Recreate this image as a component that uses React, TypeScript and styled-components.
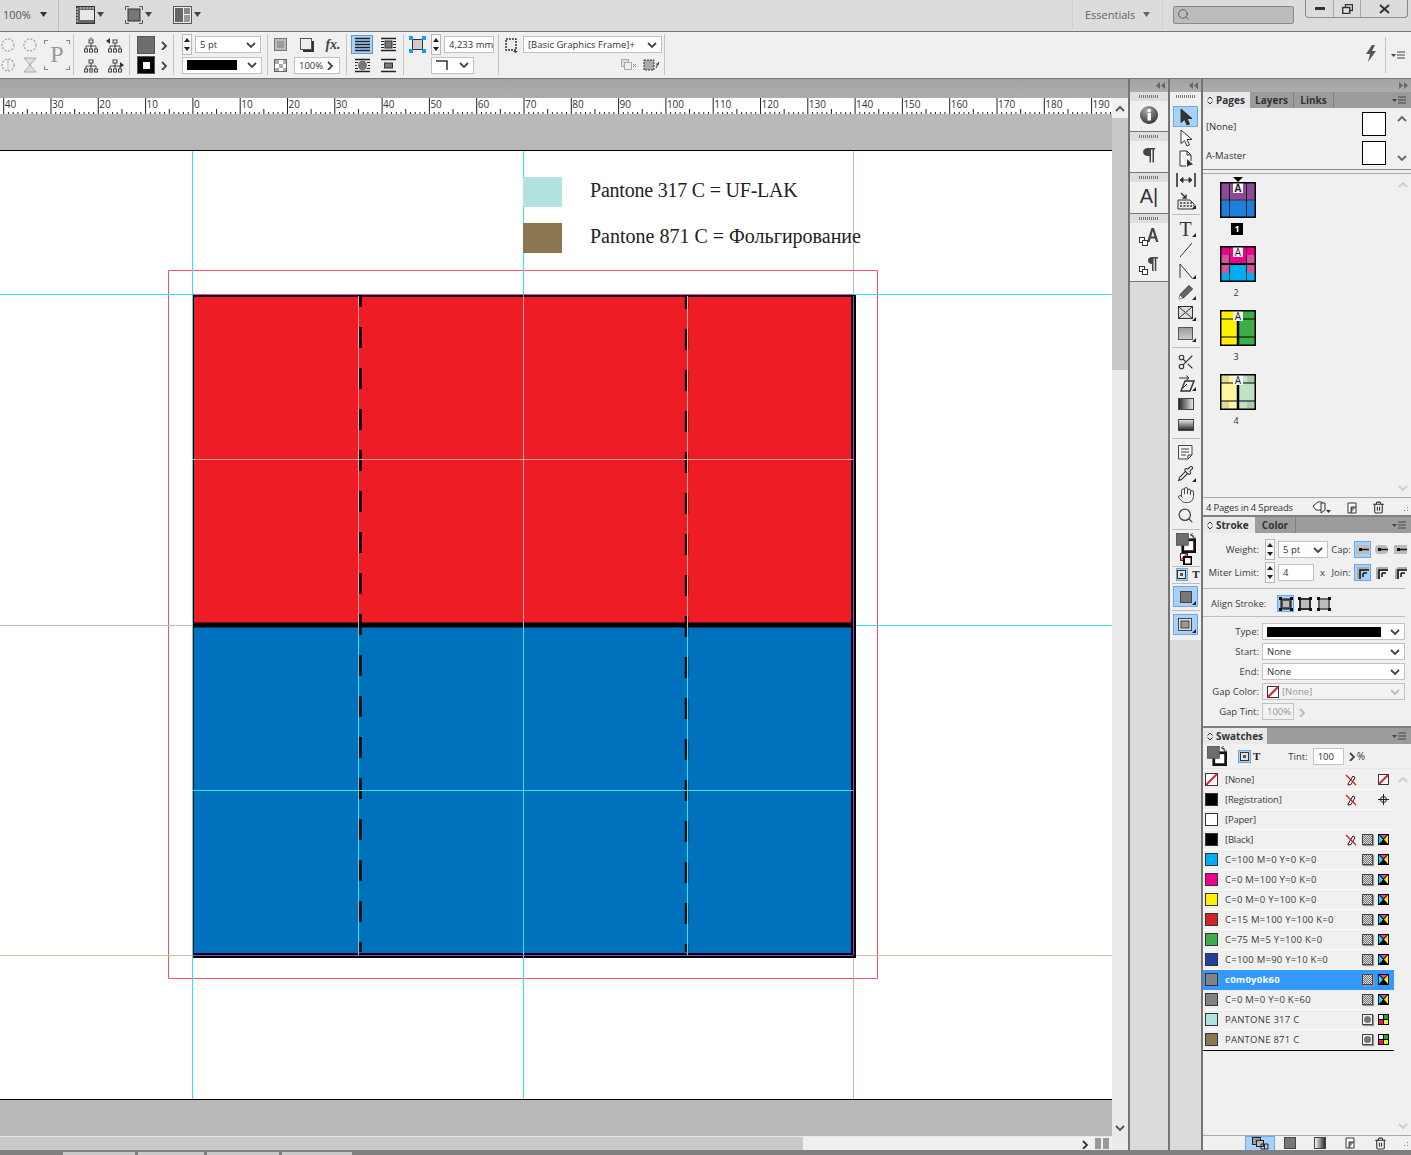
import React from 'react';
import styled, { createGlobalStyle } from 'styled-components';
import { Hand, Pipette, Scissors, Search, Trash2 } from 'lucide-react';

const GlobalStyle = createGlobalStyle`
  html, body { margin: 0; padding: 0; background: #7f7f7f; }
  * { box-sizing: border-box; }
`;

const App_ = styled.div`
  width: 1411px;
  height: 1155px;
  display: flex;
  flex-direction: column;
  overflow: hidden;
  font-family: "Open Sans", "DejaVu Sans", sans-serif;
  font-size: 10px;
  color: #333;
  background: #7f7f7f;
`;

/* ---------- title bar ---------- */
const TitleBar = styled.div`
  height: 32px;
  flex: none;
  display: flex;
  align-items: flex-start;
  background: #dcdcdc;
  border-bottom: 1px solid #777;
`;
const Zoom = styled.div`
  width: 59px;
  height: 31px;
  padding: 0 0 3px 3px;
  display: flex;
  align-items: center;
  gap: 9px;
  font-size: 11px;
  color: #555;
  border-right: 1px solid #bdbdbd;
`;
const ViewMenus = styled.div`
  display: flex;
  align-items: center;
  height: 29px;
  padding-left: 17px;
  gap: 21px;
`;
const ViewMenu = styled.div`
  display: flex;
  align-items: center;
  gap: 2px;
`;
const TitleSpacer = styled.div`
  flex: 1;
`;
const Workspace = styled.div`
  width: 91px;
  height: 29px;
  display: flex;
  align-items: center;
  gap: 8px;
  padding-left: 12px;
  font-size: 11px;
  color: #666;
  border-left: 1px solid #cfcfcf;
  border-right: 1px solid #cfcfcf;
`;
const SearchBox = styled.div`
  width: 121px;
  height: 18px;
  margin: 6px 11px 0 10px;
  padding: 1px 0 0 3px;
  background: #bcbcbc;
  border: 1px solid #8a8a8a;
  border-radius: 2px;
  color: #555;
`;
const WindowButtons = styled.div`
  width: 103px;
  height: 18px;
  margin-right: 3px;
  display: grid;
  grid-template-columns: 28px 27px 1fr;
  border: 1px solid #8a8a8a;
  border-top: none;
  border-radius: 0 0 4px 4px;
`;
const WindowButton = styled.div`
  display: flex;
  align-items: center;
  justify-content: center;
  border-right: 1px solid #aaa;
  &:last-child { border-right: none; }
`;

/* ---------- control bar ---------- */
const ControlBar = styled.div`
  height: 47px;
  flex: none;
  display: flex;
  background: #f0f0f0;
  border-bottom: 1px solid #777;
`;
const Group = styled.div<{ $w: number; $pad?: number; $cols: string; $line?: boolean }>`
  width: ${(p) => p.$w}px;
  height: 41px;
  margin-top: 2px;
  padding-left: ${(p) => p.$pad ?? 0}px;
  display: grid;
  grid-template-columns: ${(p) => p.$cols};
  grid-template-rows: 21px 20px;
  align-items: center;
  justify-items: start;
  border-right: ${(p) => (p.$line === false ? 'none' : '1px solid #c4c4c4')};
`;
const CenterCell = styled.div`
  justify-self: center;
`;
const ControlSpacer = styled.div`
  flex: 1;
`;
const Field = styled.div<{ $w: number; $span?: number; $off?: boolean }>`
  width: ${(p) => p.$w}px;
  height: 17px;
  grid-column: span ${(p) => p.$span ?? 1};
  display: flex;
  align-items: center;
  justify-content: space-between;
  padding: 0 4px;
  background: ${(p) => (p.$off ? '#f2f2f2' : '#fff')};
  border: 1px solid #c2c2c2;
  font-size: 9.5px;
  color: ${(p) => (p.$off ? '#999' : '#333')};
  white-space: nowrap;
`;
const StrokeBar = styled.span<{ $w: number }>`
  display: block;
  width: ${(p) => p.$w}px;
  height: 10px;
  background: #000;
`;
const SpinnerBox = styled.div`
  width: 10px;
  height: 21px;
  display: flex;
  flex-direction: column;
  align-items: center;
  justify-content: space-around;
  background: #f8f8f8;
  border: 1px solid #b8b8b8;
`;
const FillChip = styled.div<{ $stroke?: boolean }>`
  width: 18px;
  height: 18px;
  display: flex;
  align-items: center;
  justify-content: center;
  background: ${(p) => (p.$stroke ? '#000' : '#6d6d70')};
  border: 1px solid #555;
`;
const HoleMark = styled.span`
  width: 7px;
  height: 7px;
  background: #fff;
`;
const ToolButton = styled.div<{ $on?: boolean }>`
  width: 22px;
  height: 19px;
  display: flex;
  align-items: center;
  justify-content: center;
  background: ${(p) => (p.$on ? '#a9d1f7' : 'transparent')};
  border: 1px solid ${(p) => (p.$on ? '#5b9bd5' : 'transparent')};
`;
const RefBox = styled.div`
  grid-row: span 2;
  width: 26px;
  height: 30px;
  margin-left: 2px;
  display: flex;
  align-items: center;
  justify-content: center;
  font-family: "Liberation Serif", serif;
  font-size: 24px;
  color: #999;
  background:
    linear-gradient(#888, #888) 0 0 / 4px 1px no-repeat,
    linear-gradient(#888, #888) 0 0 / 1px 4px no-repeat,
    linear-gradient(#888, #888) 100% 0 / 4px 1px no-repeat,
    linear-gradient(#888, #888) 100% 0 / 1px 4px no-repeat,
    linear-gradient(#888, #888) 0 100% / 4px 1px no-repeat,
    linear-gradient(#888, #888) 0 100% / 1px 4px no-repeat,
    linear-gradient(#888, #888) 100% 100% / 4px 1px no-repeat,
    linear-gradient(#888, #888) 100% 100% / 1px 4px no-repeat;
`;
const FxMark = styled.span`
  font-family: "Liberation Serif", serif;
  font-style: italic;
  font-weight: bold;
  font-size: 14px;
  color: #444;
`;
const FrameActions = styled.div`
  grid-column: 2;
  width: 139px;
  display: flex;
  justify-content: flex-end;
  gap: 6px;
  padding-right: 2px;
`;
const RightBlock = styled.div`
  width: 26px;
  height: 36px;
  margin-top: 5px;
  display: flex;
  align-items: center;
  justify-content: center;
  border-left: 1px solid #c4c4c4;
`;
const BoltBlock = styled.div`
  width: 26px;
  padding: 13px 0 0 6px;
`;

/* ---------- main row ---------- */
const MainRow = styled.div`
  flex: 1;
  display: flex;
  min-height: 0;
`;
const DocColumn = styled.div`
  width: 1128px;
  flex: none;
  display: flex;
  flex-direction: column;
  background: #b9b9b9;
`;
const DocStrip = styled.div`
  height: 19px;
  flex: none;
  background: linear-gradient(#a5a5a5, #acacac);
`;
const DocBody = styled.div`
  flex: 1;
  display: grid;
  grid-template-columns: 1112px 16px;
  min-height: 0;
`;
const DocMain = styled.div`
  display: flex;
  flex-direction: column;
  min-width: 0;
`;
const RulerBar = styled.div`
  height: 16px;
  flex: none;
  background: #fff;
`;
const Pasteboard = styled.div`
  height: 36px;
  flex: none;
  background: #b9b9b9;
`;
const Canvas = styled.div`
  position: relative;
  flex: 1;
  background: #fff;
  border-top: 1px solid #000;
  border-bottom: 1px solid #000;
  overflow: hidden;
`;
const ArtLayer = styled.svg`
  position: absolute;
  left: 0;
  top: 0;
  display: block;
`;
const Legend = styled.div`
  position: absolute;
  left: 523px;
  top: 26px;
  display: flex;
  flex-direction: column;
  gap: 16px;
`;
const LegendRow = styled.div`
  height: 30px;
  display: flex;
  align-items: center;
  gap: 28px;
`;
const LegendChip = styled.div<{ $c: string }>`
  width: 39px;
  height: 30px;
  background: ${(p) => p.$c};
`;
const LegendText = styled.div<{ $track?: number }>`
  padding-bottom: 3px;
  font-family: "Liberation Serif", serif;
  font-size: 20px;
  letter-spacing: ${(p) => p.$track ?? 0}px;
  color: #222;
  white-space: nowrap;
`;
const HScroll = styled.div`
  height: 14px;
  flex: none;
  display: flex;
  align-items: center;
  background: linear-gradient(90deg, #c9c9c9 803px, #f0f0f0 803px);
  border-top: 1px solid #e8e8e8;
  justify-content: flex-end;
  gap: 5px;
  padding-right: 2px;
`;
const SplitMark = styled.span`
  width: 15px;
  height: 11px;
  background:
    linear-gradient(#999, #999) 0 0 / 6px 100% no-repeat,
    linear-gradient(#999, #999) 8px 0 / 6px 100% no-repeat;
`;
const VScroll = styled.div`
  display: flex;
  flex-direction: column;
  align-items: center;
  justify-content: space-between;
  padding: 6px 0 17px;
  background: linear-gradient(#f0f0f0 20px, #c9c9c9 20px, #c9c9c9 272px, #ebebeb 272px);
`;
const Rail = styled.div`
  width: 2px;
  flex: none;
  background: #757575;
`;
const DockColumn = styled.div<{ $w: number }>`
  width: ${(p) => p.$w}px;
  flex: none;
  display: flex;
  flex-direction: column;
  background: #dcdcdc;
`;
const DockHead = styled.div<{ $align?: string }>`
  height: 13px;
  flex: none;
  display: flex;
  align-items: center;
  justify-content: ${(p) => p.$align ?? 'flex-end'};
  padding: 0 3px;
  background: linear-gradient(#a3a3a3, #adadad);
`;
const IconSection = styled.div`
  display: flex;
  flex-direction: column;
  align-items: center;
  background: #f0f0f0;
  border-bottom: 1px solid #777;
`;
const Grip = styled.div<{ $bg?: string; $h?: number }>`
  width: 100%;
  height: ${(p) => p.$h ?? 9}px;
  padding-bottom: ${(p) => (p.$h ?? 9) - 9}px;
  flex: none;
  display: flex;
  align-items: center;
  justify-content: center;
  background: ${(p) => p.$bg ?? '#dedede'};
  &::after {
    content: '';
    width: 20px;
    height: 3px;
    background: repeating-linear-gradient(90deg, #777 0 1px, transparent 1px 2px);
  }
`;
const IconSlot = styled.div<{ $h: number; $lift?: number }>`
  height: ${(p) => p.$h}px;
  padding-bottom: ${(p) => p.$lift ?? 3}px;
  display: flex;
  align-items: center;
  justify-content: center;
`;
const ToolsPanel = styled.div`
  display: flex;
  flex-direction: column;
  align-items: center;
  background: #f0f0f0;
  padding-bottom: 5px;
`;
const ToolSlot = styled.div<{ $on?: boolean; $h?: number; $fly?: boolean }>`
  position: relative;
  width: 25px;
  height: ${(p) => p.$h ?? 21}px;
  flex: none;
  display: flex;
  align-items: center;
  justify-content: center;
  background: ${(p) => (p.$on ? '#a9d1f7' : 'transparent')};
  border: 1px solid ${(p) => (p.$on ? '#6ba7e0' : 'transparent')};
  &::after {
    content: '';
    display: ${(p) => (p.$fly ? 'block' : 'none')};
    position: absolute;
    right: 1px;
    bottom: 1px;
    width: 0;
    height: 0;
    border-left: 4px solid transparent;
    border-bottom: 4px solid #222;
  }
`;
const ToolLine = styled.div<{ $y?: number }>`
  width: 28px;
  height: 1px;
  flex: none;
  margin: ${(p) => p.$y ?? 3}px 0;
  background: #bcbcbc;
`;
const ToolT = styled.span`
  font-family: "Liberation Serif", serif;
  font-size: 20px;
  line-height: 20px;
  color: #333;
`;
const FormatRow = styled.div`
  width: 28px;
  height: 13px;
  flex: none;
  display: flex;
  align-items: center;
  padding-left: 4px;
  gap: 4px;
`;
const FormatChip = styled.div`
  width: 13px;
  height: 13px;
  display: flex;
  align-items: center;
  justify-content: center;
  background: #a9d1f7;
  border: 1px solid #6ba7e0;
`;
const SmallT = styled.span`
  font-family: "Liberation Serif", serif;
  font-weight: bold;
  font-size: 11px;
  line-height: 13px;
  color: #222;
`;
const GlyphA = styled.span`
  font-family: "Liberation Sans", sans-serif;
  font-size: 20px;
  color: #333;
`;

/* ---------- panels ---------- */
const PanelsColumn = styled.div`
  flex: 1;
  display: flex;
  flex-direction: column;
  min-width: 0;
`;
const Panel = styled.div<{ $h?: number; $grow?: boolean }>`
  ${(p) => (p.$grow ? 'flex: 1; min-height: 0;' : `height: ${p.$h}px; flex: none;`)}
  display: flex;
  flex-direction: column;
  background: #f0f0f0;
  & + & { margin-top: 2px; }
`;
const TabBar = styled.div`
  height: 16px;
  flex: none;
  display: flex;
  background: #9c9c9c;
`;
const Tab = styled.div<{ $on?: boolean; $w: number }>`
  width: ${(p) => p.$w}px;
  display: flex;
  align-items: center;
  justify-content: ${(p) => (p.$on ? 'flex-start' : 'center')};
  gap: 3px;
  padding-left: ${(p) => (p.$on ? 4 : 0)}px;
  font-size: 10px;
  font-weight: 700;
  color: #333;
  background: ${(p) => (p.$on ? '#e9e9e9' : 'transparent')};
  border-right: 1px solid ${(p) => (p.$on ? 'transparent' : '#7e7e7e')};
`;
const TabSpacer = styled.div`
  flex: 1;
`;
const TabMenu = styled.div`
  display: flex;
  align-items: center;
  padding-right: 4px;
`;
const MasterArea = styled.div`
  height: 62px;
  flex: none;
  display: grid;
  grid-template-columns: 1fr 18px;
  border-bottom: 1px solid #888;
`;
const MasterRows = styled.div`
  display: flex;
  flex-direction: column;
  padding: 4px 7px 0 3px;
  gap: 5px;
`;
const MasterRow = styled.div`
  height: 24px;
  display: flex;
  align-items: center;
  justify-content: space-between;
  font-size: 9.5px;
`;
const MasterName = styled.span`
  padding-top: 4px;
`;
const MasterChip = styled.div`
  width: 24px;
  height: 24px;
  background: #fff;
  border: 1px solid #000;
`;
const ScrollRail = styled.div<{ $pad?: string }>`
  display: flex;
  flex-direction: column;
  align-items: center;
  justify-content: space-between;
  padding: ${(p) => p.$pad ?? '6px 0'};
`;
const SpreadArea = styled.div`
  flex: 1;
  min-height: 0;
  margin-top: 3px;
  display: grid;
  grid-template-columns: 1fr 16px;
  border-top: 1px solid #aaa;
`;
const SpreadList = styled.div`
  padding: 8px 0 0 17px;
  display: flex;
  flex-direction: column;
  gap: 28px;
`;
const Spread = styled.div`
  position: relative;
  width: 36px;
  height: 36px;
`;
const SpreadMark = styled.div`
  position: absolute;
  left: 13px;
  top: -5px;
  width: 0;
  height: 0;
  border-left: 5px solid transparent;
  border-right: 5px solid transparent;
  border-top: 5px solid #000;
`;
const SpreadLabel = styled.div<{ $on?: boolean }>`
  position: absolute;
  left: 11px;
  top: 41px;
  width: ${(p) => (p.$on ? 12 : 10)}px;
  height: 12px;
  line-height: 12px;
  text-align: center;
  font-size: 9px;
  font-weight: ${(p) => (p.$on ? 700 : 400)};
  color: ${(p) => (p.$on ? '#fff' : '#333')};
  background: ${(p) => (p.$on ? '#000' : 'transparent')};
`;
const PanelFoot = styled.div<{ $h: number; $lift?: number }>`
  height: ${(p) => p.$h}px;
  flex: none;
  display: flex;
  align-items: center;
  padding: ${(p) => p.$lift ?? 0}px 1px 0 3px;
  border-top: 1px solid #aaa;
  font-size: 9.5px;
  letter-spacing: -0.2px;
  white-space: nowrap;
`;
const FootIcons = styled.div<{ $gap: number; $pl: number }>`
  display: flex;
  align-items: center;
  gap: ${(p) => p.$gap}px;
  padding-left: ${(p) => p.$pl}px;
`;
const FootTool = styled.div<{ $on?: boolean }>`
  width: 30px;
  height: 15px;
  display: flex;
  align-items: center;
  justify-content: center;
  background: ${(p) => (p.$on ? '#a9d1f7' : 'transparent')};
  border: 1px solid ${(p) => (p.$on ? '#6ba7e0' : 'transparent')};
`;
const ResizeGrip = styled.div`
  width: 10px;
  height: 10px;
  margin-left: auto;
  background: radial-gradient(circle, #888 0.6px, transparent 0.8px) 0 0 / 3px 3px;
  clip-path: polygon(100% 0, 100% 100%, 0 100%);
`;

/* stroke panel */
const StrokeBody = styled.div`
  flex: 1;
  padding: 0 6px 0 0;
`;
const StrokeTop = styled.div`
  display: grid;
  grid-template-columns: 56px 1fr;
  grid-template-rows: 23px 23px;
  align-items: center;
  padding-top: 5px;
  height: 56px;
  border-bottom: 1px solid #bbb;
`;
const PropLabel = styled.div<{ $w?: number }>`
  width: ${(p) => p.$w ?? 56}px;
  flex: none;
  text-align: right;
  color: #3c3c3c;
  font-size: 9.5px;
  white-space: nowrap;
`;
const PropCells = styled.div`
  display: flex;
  align-items: center;
  gap: 3px;
  padding-left: 6px;
`;
const MiniLabel = styled.span<{ $w: number }>`
  width: ${(p) => p.$w}px;
  flex: none;
  text-align: center;
  color: #3c3c3c;
  font-size: 9.5px;
`;
const Glyphs = styled.div`
  display: flex;
  gap: 2px;
`;
const Glyph = styled.div<{ $on?: boolean }>`
  width: 17px;
  height: 17px;
  display: flex;
  align-items: center;
  justify-content: center;
  background: ${(p) => (p.$on ? '#a9d1f7' : 'transparent')};
  border: 1px solid ${(p) => (p.$on ? '#6ba7e0' : 'transparent')};
`;
const AlignRow = styled.div`
  height: 28px;
  display: flex;
  align-items: center;
  gap: 11px;
  padding: 2px 0 0 8px;
  border-bottom: 1px solid #bbb;
  color: #3c3c3c;
  font-size: 9.5px;
`;
const PropList = styled.div`
  padding-top: 6px;
  display: flex;
  flex-direction: column;
  gap: 3px;
`;
const PropRow = styled.div`
  height: 17px;
  display: flex;
  align-items: center;
  gap: 3px;
`;

/* swatches */
const TintRow = styled.div`
  height: 25px;
  flex: none;
  display: flex;
  align-items: center;
  padding-left: 4px;
  border-bottom: 1px solid #e4e4e4;
`;
const TintFormat = styled.div`
  display: flex;
  align-items: center;
  gap: 2px;
  margin-left: 11px;
`;
const TintLabel = styled.span`
  margin: 0 5px 0 28px;
  color: #3c3c3c;
  font-size: 9.5px;
`;
const TintUnit = styled.span`
  display: flex;
  align-items: center;
  margin-left: 3px;
`;
const SwatchBody = styled.div`
  flex: 1;
  min-height: 0;
  display: grid;
  grid-template-columns: 191px 17px;
`;
const SwatchList = styled.div`
  padding-top: 1px;
`;
const SwatchRows = styled.div`
  border-bottom: 1px solid #000;
`;
const SwatchRow = styled.div<{ $on?: boolean }>`
  height: 20px;
  display: flex;
  align-items: center;
  padding-left: 2px;
  background: ${(p) => (p.$on ? '#3399ff' : 'transparent')};
  border-bottom: 1px solid ${(p) => (p.$on ? '#3399ff' : '#fbfbfb')};
  font-size: 9.5px;
  font-weight: ${(p) => (p.$on ? 700 : 400)};
  color: ${(p) => (p.$on ? '#fff' : '#3a3a3a')};
`;
const SwatchChip = styled.div<{ $c: string }>`
  width: 13px;
  height: 13px;
  flex: none;
  background: ${(p) => p.$c};
  border: 1px solid #333;
`;
const SwatchName = styled.div<{ $track: number }>`
  flex: 1;
  padding-left: 7px;
  letter-spacing: ${(p) => p.$track}px;
  white-space: nowrap;
`;
const SwatchMarks = styled.div`
  width: 46px;
  margin-right: 4px;
  flex: none;
  display: grid;
  grid-template-columns: 14px 14px 14px;
  column-gap: 2px;
  align-items: center;
  justify-items: center;
`;
const Checker = styled.span`
  width: 11px;
  height: 11px;
  background: repeating-conic-gradient(#777 0 25%, #ddd 0 50%) 0 0 / 2px 2px;
  border: 1px solid #444;
  box-shadow: 1px 1px 1px #999;
`;
const SpotMark = styled.span`
  width: 11px;
  height: 11px;
  display: flex;
  align-items: center;
  justify-content: center;
  background: #eee;
  border: 1px solid #444;
  box-shadow: 1px 1px 1px #999;
  &::after {
    content: '';
    width: 7px;
    height: 7px;
    border-radius: 50%;
    background: #777;
  }
`;
const GapNone = styled.span`
  display: flex;
  align-items: center;
  gap: 3px;
`;
const StatusStrip = styled.div`
  height: 5px;
  flex: none;
  display: flex;
  gap: 3px;
  padding-left: 63px;
  background: #7f7f7f;
`;
const DocTab = styled.div<{ $w: number }>`
  width: ${(p) => p.$w}px;
  margin-top: 2px;
  background: #c9c9c9;
`;

/* ---------- icons ---------- */
type SvgProps = { w?: number; h?: number; vb?: string; children: React.ReactNode };
const Svg = ({ w = 16, h = 16, vb, children }: SvgProps) => (
  <svg width={w} height={h} viewBox={vb ?? `0 0 ${w} ${h}`} fill="none" style={{ display: 'block' }}>
    {children}
  </svg>
);

const Chevron = ({ dir = 'down', c = '#444', s = 10 }: { dir?: 'down' | 'up' | 'right'; c?: string; s?: number }) => {
  const pts = dir === 'down' ? '1,2 5,6 9,2' : dir === 'up' ? '1,6 5,2 9,6' : '3,1 7,5 3,9';
  return (
    <Svg w={s} h={s} vb="0 0 10 8">
      <polyline points={pts} stroke={c} strokeWidth="1.8" />
    </Svg>
  );
};
const Caret = ({ c = '#444' }: { c?: string }) => (
  <Svg w={7} h={5}>
    <path d="M0 0H7L3.5 5Z" fill={c} />
  </Svg>
);
const Spinner = () => (
  <SpinnerBox>
    <Svg w={6} h={4}><path d="M0 4L3 0L6 4Z" fill="#222" /></Svg>
    <Svg w={6} h={4}><path d="M0 0L3 4L6 0Z" fill="#222" /></Svg>
  </SpinnerBox>
);
const PanelMenu = () => (
  <Svg w={15} h={9}>
    <path d="M0 3H5L2.5 6Z" fill="#444" />
    <path d="M6 1H14M6 4H14M6 7H14" stroke="#444" />
  </Svg>
);
const DoubleArrow = ({ right }: { right?: boolean }) => (
  <Svg w={9} h={7}>
    <path d={right ? 'M0 0L4 3.5L0 7ZM5 0L9 3.5L5 7Z' : 'M4 0L0 3.5L4 7ZM9 0L5 3.5L9 7Z'} fill="#666" />
  </Svg>
);
const Updown = () => (
  <Svg w={6} h={9}>
    <path d="M0.5 3.5L3 1L5.5 3.5M0.5 5.5L3 8L5.5 5.5" stroke="#333" />
  </Svg>
);
const FilmIcon = () => (
  <Svg w={19} h={18}>
    <rect x="0.5" y="0.5" width="18" height="17" fill="#666" stroke="#333" />
    <rect x="4" y="4" width="14" height="10" fill="#e8e8e8" />
    <path d="M1 2V16" stroke="#ddd" strokeDasharray="2 1" />
    <path d="M4 2H18" stroke="#ddd" strokeDasharray="2 1" />
  </Svg>
);
const ScreenIcon = () => (
  <Svg w={18} h={18}>
    <path d="M0.5 4V0.5H4M14 0.5H17.5V4M17.5 14V17.5H14M4 17.5H0.5V14" stroke="#555" />
    <rect x="3" y="3" width="12" height="12" fill="#777" stroke="#333" />
  </Svg>
);
const ArrangeIcon = () => (
  <Svg w={19} h={18}>
    <rect x="0.5" y="0.5" width="18" height="17" fill="#eee" stroke="#555" />
    <rect x="2" y="2" width="8" height="14" fill="#666" />
    <rect x="11" y="2" width="6" height="6" fill="#888" />
    <rect x="11" y="9" width="6" height="7" fill="#999" />
  </Svg>
);
const RotateFaint = ({ flip }: { flip?: boolean }) => (
  <Svg w={16} h={16}>
    <circle cx="8" cy="8" r="6" stroke="#aaa" strokeWidth="1.4" strokeDasharray="2 1.5" />
    {flip && <path d="M8 2V14" stroke="#bbb" />}
  </Svg>
);
const FlipFaint = () => (
  <Svg w={16} h={18}>
    <path d="M2 2H14L8 9L14 16H2L8 9Z" fill="#ddd" stroke="#aaa" />
  </Svg>
);
const TreeIcon = ({ arrow }: { arrow?: 'l' | 'r' | 't' | 'b' }) => (
  <Svg w={18} h={16}>
    <rect x="7" y="3" width="4" height="3" stroke="#444" />
    <path d="M9 6V9M4 12V9H14V12M9 9V12" stroke="#444" />
    <rect x="2.5" y="12" width="3" height="3" stroke="#444" />
    <rect x="7.5" y="12" width="3" height="3" stroke="#444" />
    <rect x="12.5" y="12" width="3" height="3" stroke="#444" />
    {arrow === 'l' && <path d="M0 4L4 1V7Z" fill="#333" />}
    {arrow === 'r' && <path d="M18 8L14 5V11Z" fill="#333" />}
    {arrow === 't' && <path d="M9 0L6 3H12Z" fill="#999" />}
    {arrow === 'b' && <path d="M9 16L6 13H12Z" fill="#999" />}
  </Svg>
);
const EffectBox = () => (
  <Svg w={14} h={14}>
    <rect x="0.5" y="0.5" width="12" height="12" fill="#bbb" stroke="#777" />
    <rect x="3" y="3" width="7" height="7" fill="#999" />
  </Svg>
);
const ShadowBox = () => (
  <Svg w={14} h={14}>
    <rect x="3" y="3" width="11" height="11" fill="#333" />
    <rect x="0.5" y="0.5" width="11" height="11" fill="#eee" stroke="#555" />
  </Svg>
);
const OpacityBox = () => (
  <Svg w={13} h={13}>
    <rect x="0.5" y="0.5" width="12" height="12" fill="#fff" stroke="#666" />
    <path d="M1 1h4v4h-4zM5 5h4v4h-4zM9 9h3v3h-3zM9 1h3v4h-3zM1 9h4v3h-4z" fill="#aaa" />
  </Svg>
);
const WrapIcon = ({ kind }: { kind: 0 | 1 | 2 | 3 }) => (
  <Svg w={15} h={15}>
    <path d="M0 1.5H15M0 13.5H15" stroke="#222" strokeWidth="1.4" />
    {kind === 0 && <path d="M0 4.5H15M0 7.5H15M0 10.5H15" stroke="#222" strokeWidth="1.4" />}
    {kind === 1 && <>
      <path d="M0 4.5H3M12 4.5H15M0 7.5H3M12 7.5H15M0 10.5H3M12 10.5H15" stroke="#222" />
      <rect x="4" y="4" width="7" height="7" fill="#777" stroke="#333" />
    </>}
    {kind === 2 && <>
      <path d="M0 4.5H3M12 4.5H15M0 7.5H2M13 7.5H15M0 10.5H3M12 10.5H15" stroke="#222" />
      <ellipse cx="7.5" cy="7.5" rx="4.5" ry="5" fill="#777" />
    </>}
    {kind === 3 && <rect x="3.5" y="5" width="8" height="5" fill="#777" stroke="#333" />}
  </Svg>
);
const FrameFitIcon = () => (
  <Svg w={17} h={17}>
    <rect x="3.5" y="3.5" width="10" height="10" fill="#ccc" stroke="#333" />
    <path d="M0 0h4v4h-4zM13 0h4v4h-4zM0 13h4v4h-4zM13 13h4v4h-4z" fill="#1e9be8" />
  </Svg>
);
const CornerMark = () => (
  <Svg w={14} h={12}>
    <path d="M0 2H11V11" stroke="#333" strokeWidth="1.5" />
  </Svg>
);
const StyleDots = () => (
  <Svg w={14} h={16}>
    <rect x="2" y="2" width="10" height="11" stroke="#333" strokeWidth="1.5" strokeDasharray="2 1" fill="#eee" />
    <path d="M9 14H14L11.5 16Z" fill="#333" />
  </Svg>
);
const FaintBoxes = () => (
  <Svg w={16} h={11}>
    <rect x="0.5" y="0.5" width="7" height="7" fill="#ddd" stroke="#aaa" />
    <rect x="3.5" y="3.5" width="7" height="7" fill="#eee" stroke="#aaa" />
    <path d="M12 5L15 8M15 5L12 8" stroke="#999" />
  </Svg>
);
const FrameAction = () => (
  <Svg w={17} h={12}>
    <rect x="1" y="1" width="10" height="10" fill="#aaa" stroke="#333" strokeDasharray="2 1" />
    <path d="M13 9L16 3M13 5H16" stroke="#333" />
  </Svg>
);
const Bolt = () => (
  <Svg w={12} h={17}>
    <path d="M7 0L1 9H5L3 17L11 6H7L10 0Z" fill="#555" />
  </Svg>
);
const InfoDot = () => (
  <Svg w={20} h={20}>
    <defs>
      <radialGradient id="info" cx="0.4" cy="0.25" r="0.9">
        <stop offset="0" stopColor="#aaa" />
        <stop offset="1" stopColor="#222" />
      </radialGradient>
    </defs>
    <circle cx="10" cy="10" r="9" fill="url(#info)" />
    <rect x="8.5" y="8" width="3.4" height="7.5" fill="#fff" />
    <circle cx="10.2" cy="5.6" r="1.9" fill="#fff" />
  </Svg>
);
const Pilcrow = () => (
  <Svg w={14} h={16}>
    <path d="M13 1H6C3 1 1 2.800 1 5C1 7.200 3 9 6 9H7.500V15.500H9V2.500H10.500V15.500H12V2.500H13Z" fill="#444" />
  </Svg>
);
const StyleOverlay = ({ glyph }: { glyph: 'a' | 'p' }) => (
  <Svg w={20} h={19}>
    {glyph === 'p'
      ? <path d="M19 1H13C10.500 1 9 2.500 9 4.500C9 6.500 10.500 8 13 8V15H14.500V2.500H15.800V15H17.300V2.500H19Z" fill="#444" />
      : <path d="M8 15L12.500 1H15L19.500 15H17L16 11.500H11.500L10.500 15ZM12.200 9.500H15.300L13.800 4Z" fill="#444" />}
    <rect x="0.5" y="10.500" width="5" height="5" fill="#fff" stroke="#333" />
    <rect x="3.500" y="13.500" width="5" height="5" fill="#fff" stroke="#333" />
  </Svg>
);
const ArrowTool = ({ open }: { open?: boolean }) => (
  <Svg w={14} h={18}>
    <path
      d="M2 1V14.500L5.500 11.500L8 17L10.500 16L8 10.500H13Z"
      fill={open ? '#fff' : '#333'}
      stroke="#333"
      strokeWidth="1"
    />
  </Svg>
);
const PageTool = () => (
  <Svg w={17} h={18}>
    <path d="M3 1H10L14 5V11M3 1V16H9M10 1V5H14" stroke="#333" fill="#fff" />
    <path d="M10 9V17L12 15.500L16 14.500Z" fill="#333" />
  </Svg>
);
const GapTool = () => (
  <Svg w={20} h={16}>
    <path d="M1 1V15M19 1V15" stroke="#333" strokeWidth="1.6" />
    <path d="M4 8H16M4 8L7 5.500V10.500ZM16 8L13 5.500V10.500Z" stroke="#333" fill="#333" />
  </Svg>
);
const CollectorTool = () => (
  <Svg w={18} h={18}>
    <path d="M4 1L9 6M9 2.500V6H5.500" stroke="#333" strokeWidth="1.4" />
    <path d="M1 8H13L17 12V17H1Z" fill="#e8e8e8" stroke="#333" />
    <path d="M3 11H15M3 14H15" stroke="#333" strokeDasharray="2 1.400" strokeWidth="1.400" />
  </Svg>
);
const LineTool = () => (
  <Svg w={16} h={16}>
    <path d="M2 15L14 1" stroke="#333" />
  </Svg>
);
const PenTool = () => (
  <Svg w={16} h={16}>
    <path d="M2 15V1L14 15" stroke="#333" />
  </Svg>
);
const PencilTool = () => (
  <Svg w={16} h={16}>
    <path d="M1 15L2.500 10L11 1.500L14.500 5L6 13.500Z" fill="#666" stroke="#333" />
    <path d="M1 15L2 11.500L4.500 14Z" fill="#fff" />
  </Svg>
);
const FrameTool = () => (
  <Svg w={15} h={13}>
    <rect x="0.5" y="0.5" width="14" height="12" fill="#ddd" stroke="#333" />
    <path d="M1 1L14 12M14 1L1 12" stroke="#333" />
  </Svg>
);
const RectTool = () => (
  <Svg w={15} h={13}>
    <defs>
      <linearGradient id="rtg" x1="0" y1="0" x2="0" y2="1">
        <stop offset="0" stopColor="#999" />
        <stop offset="1" stopColor="#ccc" />
      </linearGradient>
    </defs>
    <rect x="0.5" y="0.5" width="14" height="12" fill="url(#rtg)" stroke="#555" />
  </Svg>
);
const TransformTool = () => (
  <Svg w={18} h={18}>
    <path d="M4 17L8 7H17L13 17Z" fill="#eee" stroke="#333" strokeWidth="1.400" />
    <path d="M6 14L10 10M2 4H12M12 4L9 1.500M12 4L9 6.500" stroke="#333" />
  </Svg>
);
const GradientTool = ({ feather }: { feather?: boolean }) => (
  <Svg w={16} h={12}>
    <defs>
      <linearGradient id={feather ? 'gf' : 'gs'} x1="0" y1="0" x2={feather ? 0 : 1} y2={feather ? 1 : 0}>
        <stop offset="0" stopColor={feather ? '#eee' : '#222'} />
        <stop offset="1" stopColor={feather ? '#222' : '#eee'} />
      </linearGradient>
    </defs>
    <rect x="0.5" y="0.5" width="15" height="11" fill={`url(#${feather ? 'gf' : 'gs'})`} stroke="#444" />
  </Svg>
);
const NoteTool = () => (
  <Svg w={15} h={15}>
    <path d="M0.500 0.500H14V10L10 14H0.500Z" fill="#f4f4f4" stroke="#444" />
    <path d="M3 4H11M3 7H11M3 10H8M10 14V10H14" stroke="#444" />
  </Svg>
);
const PreviewIcon = () => (
  <Svg w={15} h={13}>
    <rect x="0.500" y="0.500" width="13" height="12" fill="#ddd" stroke="#444" />
    <rect x="3" y="3" width="8" height="7" fill="#999" stroke="#444" />
  </Svg>
);
const FillStroke = ({ small }: { small?: boolean }) => (
  <Svg w={small ? 12 : 20} h={small ? 12 : 20} vb={small ? '0 0 12 12' : '0 0 22 22'}>
    {small ? (
      <>
        <rect x="0.500" y="0.500" width="7" height="7" fill="#fff" stroke="#333" />
        <path d="M1 7L7 1" stroke="#e22" strokeWidth="1.400" />
        <rect x="4" y="4" width="7.500" height="7.500" fill="#fff" stroke="#000" strokeWidth="2" />
      </>
    ) : (
      <>
        <rect x="7.500" y="7.500" width="13" height="13" fill="#fff" stroke="#111" strokeWidth="3" />
        <rect x="0.500" y="0.500" width="13" height="13" fill="#6d6d70" stroke="#555" />
        <path d="M16 2Q20 2 20 6M18.500 0.500L16 2L18.500 4M18.500 5L20 7L21.500 5" stroke="#333" />
      </>
    )}
  </Svg>
);
const FormatBox = () => (
  <Svg w={9} h={9}>
    <rect x="0.500" y="0.500" width="8" height="8" fill="#e4e4e4" stroke="#333" />
    <rect x="3" y="3" width="3" height="3" fill="#555" />
  </Svg>
);
const CapIcon = ({ kind }: { kind: number }) => (
  <Svg w={13} h={13}>
    <rect x="0" y="2" width="13" height="9" rx={kind === 1 ? 4 : 0} fill="#bbb" />
    <path d="M4 6.500H13" stroke="#111" strokeWidth="1.500" />
    <rect x="3" y="5" width="3" height="3" fill="#111" />
  </Svg>
);
const JoinIcon = ({ kind }: { kind: number }) => (
  <Svg w={13} h={13}>
    <path
      d={kind === 0 ? 'M1 1H13V5H5V13H1Z' : kind === 1 ? 'M2 1H13V5H5V13H1V2Z' : 'M4 1H13V5H5V13H1V4Z'}
      fill="#aaa"
    />
    <path d="M4 13V4H13M7 7H11M7 7V11" stroke="#111" strokeWidth="1.500" />
  </Svg>
);
const AlignIcon = ({ kind }: { kind: number }) => (
  <Svg w={14} h={14}>
    <rect
      x={kind === 0 ? 3 : kind === 1 ? 2 : 1}
      y={kind === 0 ? 3 : kind === 1 ? 2 : 1}
      width={kind === 0 ? 8 : kind === 1 ? 10 : 12}
      height={kind === 0 ? 8 : kind === 1 ? 10 : 12}
      fill="#bbb"
      stroke="#555"
      strokeWidth={kind === 2 ? 0 : 2}
    />
    <rect x="2" y="2" width="10" height="10" stroke="#111" fill="none" />
    <path d="M0 0h3v3h-3zM11 0h3v3h-3zM0 11h3v3h-3zM11 11h3v3h-3z" fill="#111" />
  </Svg>
);
const NoneSlash = ({ s = 13 }: { s?: number }) => (
  <Svg w={s} h={s}>
    <rect x="0.500" y="0.500" width={s - 1} height={s - 1} fill="#fff" stroke="#333" />
    <path d={`M1 ${s - 1}L${s - 1} 1`} stroke="#e21e26" strokeWidth="2" />
  </Svg>
);
const NoEdit = () => (
  <Svg w={12} h={12}>
    <path d="M3 10L8 2L10 3.500L6 10.500L3 11Z" stroke="#222" fill="#fff" />
    <path d="M1 1L11 11" stroke="#e21e26" strokeWidth="1.400" />
  </Svg>
);
const RegMark = () => (
  <Svg w={11} h={11}>
    <circle cx="5.500" cy="5.500" r="3" stroke="#222" />
    <path d="M5.500 0V11M0 5.500H11" stroke="#222" />
  </Svg>
);
const CmykMark = () => (
  <Svg w={11} h={11}>
    <rect width="11" height="11" fill="#000" />
    <path d="M1 1L5 5.500L1 10Z" fill="#00e5ff" />
    <path d="M2 1H9L5.500 4.500Z" fill="#ff2bd0" />
    <path d="M10 1V10L6 5.500Z" fill="#ffee00" />
  </Svg>
);
const SpotColors = () => (
  <Svg w={11} h={11}>
    <rect width="11" height="11" fill="#000" />
    <rect x="1" y="1" width="4" height="4" fill="#eee" />
    <rect x="6" y="1" width="4" height="4" fill="#2a2" />
    <rect x="1" y="6" width="4" height="4" fill="#e22" />
    <rect x="6" y="6" width="4" height="4" fill="#ee2" />
  </Svg>
);
const NewPage = () => (
  <Svg w={12} h={12}>
    <path d="M2 1H10V11H2Z" fill="#fff" stroke="#333" />
    <path d="M5 11V5H10" fill="#888" stroke="#333" />
  </Svg>
);
const SpreadPlus = () => (
  <Svg w={20} h={13}>
    <path d="M1 5L6 1H10V9H4Z" fill="#fff" stroke="#333" />
    <path d="M9 2H13V9L9 12Z" fill="#eee" stroke="#333" />
    <path d="M14 9H19L16.500 12Z" fill="#333" />
  </Svg>
);
const ShowAll = () => (
  <Svg w={17} h={13}>
    <rect x="0.500" y="0.500" width="8" height="7" fill="#999" stroke="#222" />
    <rect x="4.500" y="3.500" width="7" height="6" fill="#bbb" stroke="#222" />
    <path d="M9 7H16V12H9ZM12.500 7V12" stroke="#222" />
  </Svg>
);
const ThumbChip = ({ grad }: { grad?: boolean }) => (
  <Svg w={12} h={12}>
    <defs>
      <linearGradient id="tch" x1="0" x2="1" y1="0" y2="0">
        <stop offset="0" stopColor="#fff" />
        <stop offset="1" stopColor="#222" />
      </linearGradient>
    </defs>
    <rect x="0.500" y="0.500" width="11" height="11" fill={grad ? 'url(#tch)' : '#777'} stroke="#444" />
  </Svg>
);

type ThumbProps = {
  top: string;
  bottom: string;
  vertical?: boolean;
  corner?: string;
  cornerRight?: string;
  outer?: boolean;
  heavy?: boolean;
  bold?: boolean;
};
const Thumb = ({ top, bottom, vertical, corner, cornerRight, outer, heavy, bold }: ThumbProps) => {
  const y1 = outer ? 1 : 9;
  const y2 = outer ? 27 : 19;
  return (
    <Svg w={36} h={36}>
      {vertical ? (
        <>
          <rect width="18" height="36" fill={top} />
          <rect x="18" width="18" height="36" fill={bottom} />
        </>
      ) : (
        <>
          <rect width="36" height="18" fill={top} />
          <rect y="18" width="36" height="18" fill={bottom} />
        </>
      )}
      {corner && (
        <>
          <rect x="1" y={y1} width="8" height="8" fill={corner} />
          <rect x="27" y={y1} width="8" height="8" fill={cornerRight ?? corner} />
          <rect x="1" y={y2} width="8" height="8" fill={corner} />
          <rect x="27" y={y2} width="8" height="8" fill={cornerRight ?? corner} />
        </>
      )}
      {vertical ? (
        <>
          <path d="M18 0V36" stroke="#000" strokeWidth="2.500" />
          <path d="M0 9H36M0 27H36" stroke="#000" />
        </>
      ) : (
        <>
          <path d="M0 18H36" stroke={heavy ? '#000' : '#333'} strokeWidth={heavy ? 2 : 1} />
          <path d="M9.500 0V36M26.500 0V36" stroke="#000" strokeWidth="1" opacity="0.7" />
        </>
      )}
      <rect x="13" y="1" width="10" height="10" fill="#fff" opacity="0.95" />
      <text x="18" y="10" textAnchor="middle" fontSize="10" fontWeight={bold ? 700 : 400} fontFamily="Open Sans, sans-serif" fill="#222">A</text>
      <rect x="0.750" y="0.750" width="34.500" height="34.500" stroke="#000" strokeWidth="1.500" />
    </Svg>
  );
};

/* ---------- data ---------- */
const swatches = [
  { name: '[None]', color: '#fff', kind: 'none' },
  { name: '[Registration]', color: '#000', kind: 'reg' },
  { name: '[Paper]', color: '#fff', kind: 'paper' },
  { name: '[Black]', color: '#000', kind: 'black' },
  { name: 'C=100 M=0 Y=0 K=0', color: '#00aeef', kind: 'cmyk' },
  { name: 'C=0 M=100 Y=0 K=0', color: '#ec008c', kind: 'cmyk' },
  { name: 'C=0 M=0 Y=100 K=0', color: '#fff200', kind: 'cmyk' },
  { name: 'C=15 M=100 Y=100 K=0', color: '#d2232a', kind: 'cmyk' },
  { name: 'C=75 M=5 Y=100 K=0', color: '#3fae49', kind: 'cmyk' },
  { name: 'C=100 M=90 Y=10 K=0', color: '#21409a', kind: 'cmyk' },
  { name: 'c0m0y0k60', color: '#808285', kind: 'cmyk', on: true },
  { name: 'C=0 M=0 Y=0 K=60', color: '#808285', kind: 'cmyk' },
  { name: 'PANTONE 317 C', color: '#b2e2df', kind: 'spot' },
  { name: 'PANTONE 871 C', color: '#8a7750', kind: 'spot' },
];

const SwatchMarkCells = ({ kind }: { kind: string }) => {
  if (kind === 'none') return <><NoEdit /><span /><NoneSlash s={11} /></>;
  if (kind === 'reg') return <><NoEdit /><span /><RegMark /></>;
  if (kind === 'paper') return null;
  if (kind === 'black') return <><NoEdit /><Checker /><CmykMark /></>;
  if (kind === 'spot') return <><span /><SpotMark /><SpotColors /></>;
  return <><span /><Checker /><CmykMark /></>;
};

const rulerMarks = Array.from({ length: 24 }, (_, i) => i - 4);
const unit = 47.3;
const zero = 192.9;

const Ruler = () => (
  <Svg w={1112} h={16}>
    {rulerMarks.map((n) => {
      const x = zero + n * unit;
      return (
        <g key={n}>
          <path d={`M${x} 0V16`} stroke="#222" />
          <text x={x + 1} y={10} fontSize="10" fontFamily="Open Sans, sans-serif" fill="#333">{Math.abs(n) * 10}</text>
          {Array.from({ length: 9 }, (_, k) => k + 1).map((k) => (
            <path key={k} d={`M${x + (k * unit) / 10} ${k === 5 ? 11 : 14}V16`} stroke="#222" />
          ))}
        </g>
      );
    })}
  </Svg>
);

const dashes = (x: number, from: number, to: number, start: number) => {
  const out: string[] = [];
  for (let y = start; y < to; y += 41) {
    const a = Math.max(y, from);
    const b = Math.min(y + 21, to);
    if (b > a) out.push(`M${x} ${a}V${b}`);
  }
  return out.join('');
};

/* page content, viewBox in screen coordinates */
const Artwork = () => (
  <ArtLayer width="1112" height="948" viewBox="0 151 1112 948" fill="none">
    <rect x="193" y="295" width="660" height="330" fill="#ee1c25" />
    <rect x="193" y="625" width="660" height="330" fill="#0071bc" />
    <path d="M193 296H853" stroke="#000" strokeWidth="2" />
    <path d="M193 295V957" stroke="#000" strokeWidth="2" />
    <path d="M853.500 294V958" stroke="#000" strokeWidth="5" />
    <path d="M192 955.500H856" stroke="#000" strokeWidth="5" />
    <path d="M193 625H856" stroke="#000" strokeWidth="5" />
    <path d={dashes(360, 297, 952, 286)} stroke="#000" strokeWidth="3.500" />
    <path d={dashes(686.500, 297, 952, 288)} stroke="#000" strokeWidth="3.500" />
    <path d="M168.500 270.500H877.500V978.500H168.500Z" stroke="#ff4d6d" />
    <path d="M192.500 151V1099M0 294.500H1112M523.500 151V296M523.500 955V1099M358.500 625V955M687.500 625V955M193 790.500H853M523.500 625V955M856 625.500H1112" stroke="#2fe6ea" />
    <path d="M358.500 296V625M687.500 296V625M523.500 296V625M193 459.500H853" stroke="#f6a0a8" />
    <path d="M0 625.500H192" stroke="#c9b4cc" />
    <path d="M0 955.500H192M856 955.500H1112" stroke="#c4c0a0" />
    <path d="M853.500 151V294M853.500 958V1099" stroke="#c4bba6" />
    <path d="M193 294.500H853" stroke="#e23cf0" />
    <path d="M193 955.500H853M853.500 296V955" stroke="#a23ce0" />
  </ArtLayer>
);

type ToolDef = { icon: React.ReactNode; fly?: boolean };
const toolGroups: ToolDef[][] = [
  [
    { icon: <ArrowTool open /> },
    { icon: <PageTool /> },
    { icon: <GapTool /> },
    { icon: <CollectorTool />, fly: true },
  ],
  [
    { icon: <ToolT>T</ToolT>, fly: true },
    { icon: <LineTool /> },
    { icon: <PenTool />, fly: true },
    { icon: <PencilTool />, fly: true },
    { icon: <FrameTool />, fly: true },
    { icon: <RectTool />, fly: true },
  ],
  [
    { icon: <Scissors size={18} color="#333" strokeWidth={1.5} /> },
    { icon: <TransformTool />, fly: true },
    { icon: <GradientTool /> },
    { icon: <GradientTool feather /> },
  ],
  [
    { icon: <NoteTool /> },
    { icon: <Pipette size={17} color="#333" strokeWidth={1.5} />, fly: true },
    { icon: <Hand size={18} color="#444" strokeWidth={1.3} /> },
    { icon: <Search size={17} color="#444" strokeWidth={1.8} /> },
  ],
];

const trackFor = (name: string) => (name.startsWith('[') ? -0.2 : 0.25);

const ToolList = ({ items }: { items: ToolDef[] }) => (
  <>
    {items.map((t, i) => <ToolSlot key={i} $fly={t.fly}>{t.icon}</ToolSlot>)}
  </>
);

export default function App() {
  return (
    <App_>
      <GlobalStyle />
      <TitleBar>
        <Zoom>100%<Caret c="#333" /></Zoom>
        <ViewMenus>
          <ViewMenu><FilmIcon /><Caret /></ViewMenu>
          <ViewMenu><ScreenIcon /><Caret /></ViewMenu>
          <ViewMenu><ArrangeIcon /><Caret /></ViewMenu>
        </ViewMenus>
        <TitleSpacer />
        <Workspace>Essentials<Caret c="#666" /></Workspace>
        <SearchBox><Search size={13} strokeWidth={1.6} /></SearchBox>
        <WindowButtons>
          <WindowButton><Svg w={10} h={4}><rect width="10" height="3" fill="#333" /></Svg></WindowButton>
          <WindowButton>
            <Svg w={11} h={10}>
              <rect x="3.500" y="0.500" width="7" height="6" stroke="#333" strokeWidth="1.400" />
              <rect x="0.700" y="3.500" width="7" height="6" fill="#dcdcdc" stroke="#333" strokeWidth="1.400" />
            </Svg>
          </WindowButton>
          <WindowButton><Svg w={11} h={10}><path d="M1 1L10 9M10 1L1 9" stroke="#333" strokeWidth="2" /></Svg></WindowButton>
        </WindowButtons>
      </TitleBar>

      <ControlBar>
        <Group $w={74} $cols="22px 20px 30px" $pad={0}>
          <RotateFaint />
          <RotateFaint />
          <RefBox>P</RefBox>
          <RotateFaint flip />
          <FlipFaint />
        </Group>
        <Group $w={56} $pad={8} $cols="24px 22px">
          <TreeIcon arrow="t" />
          <TreeIcon arrow="l" />
          <TreeIcon arrow="b" />
          <TreeIcon arrow="r" />
        </Group>
        <Group $w={44} $pad={7} $cols="22px 14px">
          <FillChip />
          <Chevron dir="right" />
          <FillChip $stroke><HoleMark /></FillChip>
          <Chevron dir="right" />
        </Group>
        <Group $w={94} $pad={8} $cols="13px 66px">
          <Spinner />
          <Field $w={66}>5 pt<Chevron /></Field>
          <Field $w={80} $span={2}><StrokeBar $w={50} /><Chevron /></Field>
        </Group>
        <Group $w={79} $pad={6} $cols="20px 26px 26px">
          <EffectBox />
          <CenterCell><ShadowBox /></CenterCell>
          <CenterCell><FxMark>fx.</FxMark></CenterCell>
          <OpacityBox />
          <Field $w={46} $span={2}>100%<Chevron dir="right" /></Field>
        </Group>
        <Group $w={57} $pad={4} $cols="26px 24px">
          <ToolButton $on><WrapIcon kind={0} /></ToolButton>
          <ToolButton><WrapIcon kind={1} /></ToolButton>
          <ToolButton><WrapIcon kind={2} /></ToolButton>
          <ToolButton><WrapIcon kind={3} /></ToolButton>
        </Group>
        <Group $w={95} $pad={5} $cols="22px 13px 50px">
          <FrameFitIcon />
          <Spinner />
          <Field $w={50}>4,233 mm</Field>
          <span />
          <Field $w={43} $span={2}><CornerMark /><Chevron /></Field>
        </Group>
        <Group $w={166} $pad={5} $cols="19px 139px">
          <StyleDots />
          <Field $w={139}>[Basic Graphics Frame]+<Chevron /></Field>
          <FrameActions><FaintBoxes /><FrameAction /></FrameActions>
        </Group>
        <ControlSpacer />
        <BoltBlock><Bolt /></BoltBlock>
        <RightBlock><PanelMenu /></RightBlock>
      </ControlBar>

      <MainRow>
        <DocColumn>
          <DocStrip />
          <DocBody>
            <DocMain>
              <RulerBar><Ruler /></RulerBar>
              <Pasteboard />
              <Canvas>
                <Artwork />
                <Legend>
                  <LegendRow>
                    <LegendChip $c="#b2e2df" />
                    <LegendText $track={-0.22}>Pantone 317 C = UF-LAK</LegendText>
                  </LegendRow>
                  <LegendRow>
                    <LegendChip $c="#8a7750" />
                    <LegendText>Pantone 871 C = Фольгирование</LegendText>
                  </LegendRow>
                </Legend>
              </Canvas>
              <Pasteboard />
              <HScroll><Chevron dir="right" c="#333" /><SplitMark /></HScroll>
            </DocMain>
            <VScroll>
              <Chevron dir="up" c="#555" />
              <Chevron c="#555" />
            </VScroll>
          </DocBody>
        </DocColumn>
        <Rail />
        <DockColumn $w={38}>
          <DockHead><DoubleArrow /></DockHead>
          <IconSection>
            <Grip />
            <IconSlot $h={30}><InfoDot /></IconSlot>
          </IconSection>
          <IconSection>
            <Grip />
            <IconSlot $h={31}><Pilcrow /></IconSlot>
          </IconSection>
          <IconSection>
            <Grip />
            <IconSlot $h={31}><GlyphA>A|</GlyphA></IconSlot>
          </IconSection>
          <IconSection>
            <Grip />
            <IconSlot $h={30}><StyleOverlay glyph="a" /></IconSlot>
            <IconSlot $h={28}><StyleOverlay glyph="p" /></IconSlot>
          </IconSection>
        </DockColumn>
        <Rail />
        <DockColumn $w={31}>
          <DockHead><DoubleArrow /></DockHead>
          <ToolsPanel>
            <Grip $bg="#f0f0f0" $h={14} />
            <ToolSlot $on><ArrowTool /></ToolSlot>
            <ToolList items={toolGroups[0]} />
            <ToolLine />
            <ToolList items={toolGroups[1]} />
            <ToolLine />
            <ToolList items={toolGroups[2]} />
            <ToolLine />
            <ToolList items={toolGroups[3]} />
            <ToolLine />
            <ToolSlot $h={20}><FillStroke /></ToolSlot>
            <ToolSlot $h={12}><FillStroke small /></ToolSlot>
            <ToolLine $y={1} />
            <FormatRow>
              <FormatChip><FormatBox /></FormatChip>
              <SmallT>T</SmallT>
            </FormatRow>
            <ToolLine $y={2} />
            <ToolSlot $on $fly><ThumbChip /></ToolSlot>
            <ToolLine />
            <ToolSlot $on $fly><PreviewIcon /></ToolSlot>
          </ToolsPanel>
        </DockColumn>
        <Rail />
        <PanelsColumn>
          <DockHead><DoubleArrow right /></DockHead>
          <Panel $h={423}>
            <TabBar>
              <Tab $on $w={47}><Updown />Pages</Tab>
              <Tab $w={44}>Layers</Tab>
              <Tab $w={40}>Links</Tab>
              <TabSpacer />
              <TabMenu><PanelMenu /></TabMenu>
            </TabBar>
            <MasterArea>
              <MasterRows>
                <MasterRow><MasterName>[None]</MasterName><MasterChip /></MasterRow>
                <MasterRow><MasterName>A-Master</MasterName><MasterChip /></MasterRow>
              </MasterRows>
              <ScrollRail>
                <Chevron dir="up" c="#666" />
                <Chevron c="#666" />
              </ScrollRail>
            </MasterArea>
            <SpreadArea>
              <SpreadList>
                <Spread>
                  <SpreadMark />
                  <Thumb top="#8b4a96" bottom="#1e7fd6" bold />
                  <SpreadLabel $on>1</SpreadLabel>
                </Spread>
                <Spread>
                  <Thumb top="#ec008c" bottom="#00aeef" corner="#d4559a" heavy />
                  <SpreadLabel>2</SpreadLabel>
                </Spread>
                <Spread>
                  <Thumb top="#fff200" bottom="#3fae49" vertical />
                  <SpreadLabel>3</SpreadLabel>
                </Spread>
                <Spread>
                  <Thumb top="#fff5a0" bottom="#c2e2c6" vertical corner="#e0d898" cornerRight="#a8cdb0" outer />
                  <SpreadLabel>4</SpreadLabel>
                </Spread>
              </SpreadList>
              <ScrollRail $pad="6px 0 4px">
                <Chevron dir="up" c="#ccc" />
                <Chevron c="#ccc" />
              </ScrollRail>
            </SpreadArea>
            <PanelFoot $h={18} $lift={2}>
              4 Pages in 4 Spreads
              <FootIcons $gap={14} $pl={19}>
                <SpreadPlus />
                <NewPage />
                <Trash2 size={13} color="#333" />
              </FootIcons>
              <ResizeGrip />
            </PanelFoot>
          </Panel>
          <Panel $h={209}>
            <TabBar>
              <Tab $on $w={52}><Updown />Stroke</Tab>
              <Tab $w={41}>Color</Tab>
              <TabSpacer />
              <TabMenu><PanelMenu /></TabMenu>
            </TabBar>
            <StrokeBody>
              <StrokeTop>
                <PropLabel>Weight:</PropLabel>
                <PropCells>
                  <Spinner />
                  <Field $w={50}>5 pt<Chevron /></Field>
                  <MiniLabel $w={20}>Cap:</MiniLabel>
                  <Glyphs>
                    <Glyph $on><CapIcon kind={0} /></Glyph>
                    <Glyph><CapIcon kind={1} /></Glyph>
                    <Glyph><CapIcon kind={2} /></Glyph>
                  </Glyphs>
                </PropCells>
                <PropLabel>Miter Limit:</PropLabel>
                <PropCells>
                  <Spinner />
                  <Field $w={36}>4</Field>
                  <MiniLabel $w={11}>x</MiniLabel>
                  <MiniLabel $w={20}>Join:</MiniLabel>
                  <Glyphs>
                    <Glyph $on><JoinIcon kind={0} /></Glyph>
                    <Glyph><JoinIcon kind={1} /></Glyph>
                    <Glyph><JoinIcon kind={2} /></Glyph>
                  </Glyphs>
                </PropCells>
              </StrokeTop>
              <AlignRow>
                Align Stroke:
                <Glyphs>
                  <Glyph $on><AlignIcon kind={0} /></Glyph>
                  <Glyph><AlignIcon kind={1} /></Glyph>
                  <Glyph><AlignIcon kind={2} /></Glyph>
                </Glyphs>
              </AlignRow>
              <PropList>
                <PropRow><PropLabel>Type:</PropLabel><Field $w={143}><StrokeBar $w={114} /><Chevron /></Field></PropRow>
                <PropRow><PropLabel>Start:</PropLabel><Field $w={143}>None<Chevron /></Field></PropRow>
                <PropRow><PropLabel>End:</PropLabel><Field $w={143}>None<Chevron /></Field></PropRow>
                <PropRow>
                  <PropLabel>Gap Color:</PropLabel>
                  <Field $w={143} $off>
                    <GapNone><NoneSlash s={12} />[None]</GapNone>
                    <Chevron c="#bbb" />
                  </Field>
                </PropRow>
                <PropRow>
                  <PropLabel>Gap Tint:</PropLabel>
                  <Field $w={32} $off>100%</Field>
                  <Chevron dir="right" c="#bbb" />
                </PropRow>
              </PropList>
            </StrokeBody>
          </Panel>
          <Panel $grow>
            <TabBar>
              <Tab $on $w={64}><Updown />Swatches</Tab>
              <TabSpacer />
              <TabMenu><PanelMenu /></TabMenu>
            </TabBar>
            <TintRow>
              <FillStroke />
              <TintFormat>
                <FormatChip><FormatBox /></FormatChip>
                <SmallT>T</SmallT>
              </TintFormat>
              <TintLabel>Tint:</TintLabel>
              <Field $w={31}>100</Field>
              <TintUnit><Chevron dir="right" />%</TintUnit>
            </TintRow>
            <SwatchBody>
              <SwatchList>
                <SwatchRows>
                  {swatches.map((s) => (
                    <SwatchRow key={s.name} $on={s.on}>
                      {s.kind === 'none' ? <NoneSlash /> : <SwatchChip $c={s.color} />}
                      <SwatchName $track={trackFor(s.name)}>{s.name}</SwatchName>
                      <SwatchMarks><SwatchMarkCells kind={s.kind} /></SwatchMarks>
                    </SwatchRow>
                  ))}
                </SwatchRows>
              </SwatchList>
              <ScrollRail $pad="6px 0 4px">
                <Chevron dir="up" c="#ccc" />
                <Chevron c="#ccc" />
              </ScrollRail>
            </SwatchBody>
            <PanelFoot $h={15}>
              <FootIcons $gap={0} $pl={39}>
                <FootTool $on><ShowAll /></FootTool>
                <FootTool><ThumbChip /></FootTool>
                <FootTool><ThumbChip grad /></FootTool>
                <FootTool><NewPage /></FootTool>
                <FootTool><Trash2 size={13} color="#333" /></FootTool>
              </FootIcons>
              <ResizeGrip />
            </PanelFoot>
          </Panel>
        </PanelsColumn>
      </MainRow>
      <StatusStrip>
        <DocTab $w={72} />
        <DocTab $w={66} />
        <DocTab $w={72} />
        <DocTab $w={70} />
      </StatusStrip>
    </App_>
  );
}
